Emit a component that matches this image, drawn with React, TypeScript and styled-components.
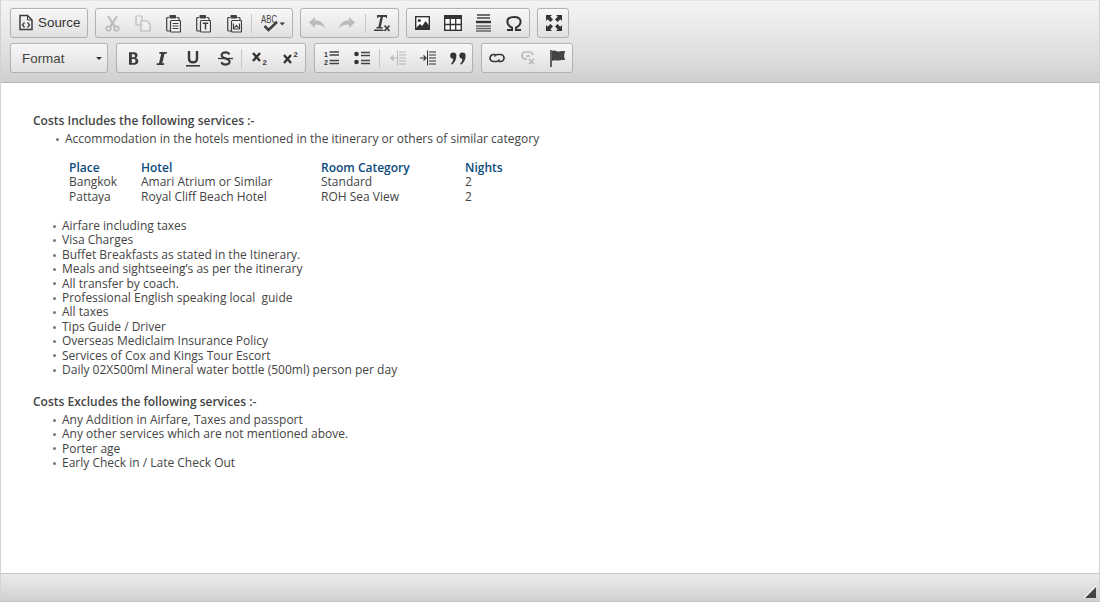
import React from "react";
import styled, { createGlobalStyle } from "styled-components";

const Global = createGlobalStyle`
  html, body { margin: 0; padding: 0; background: #fff; }
  #root { width: 1100px; height: 602px; }
`;

const Editor = styled.div`
  width: 1100px; height: 602px; box-sizing: border-box;
  display: flex; flex-direction: column;
  border: 1px solid #d2d2d2; border-top-color: #e4e4e4; border-bottom-color: #c4c4c4;
  background: #fff;
`;
const Toolbar = styled.div`
  flex: 0 0 82px; box-sizing: border-box;
  padding: 7px 9px 0;
  display: flex; flex-direction: column; gap: 5px;
  background: linear-gradient(to bottom, #f4f4f4 0%, #e6e6e6 45%, #cfd1cf 100%);
  border-bottom: 1px solid #b6b6b6;
`;
const Row = styled.div`
  display: flex; height: 30px;
`;
const Group = styled.div<{ $w: number; $ml?: number }>`
  width: ${p => p.$w}px; margin-left: ${p => p.$ml ?? 0}px;
  box-sizing: border-box; height: 30px;
  display: flex; align-items: center; padding-left: 1px;
  border: 1px solid #b2b2b2; border-radius: 3px;
  background: linear-gradient(to bottom, #f7f7f7, #ececec 50%, #e0e0e0);
  box-shadow: 0 1px 0 rgba(255,255,255,.6) inset, 0 0 1px rgba(0,0,0,.1);
`;
const Btn = styled.div<{ $w?: number; $off?: boolean }>`
  width: ${p => p.$w ?? 30.5}px; height: 28px; flex: none;
  display: flex; align-items: center; justify-content: center;
  opacity: ${p => (p.$off ? 0.28 : 1)};
  svg { display: block; }
`;
const Sep = styled.div<{ $ml?: number }>`
  width: 1px; height: 19px; background: #c6c6c6; flex: none; margin-left: ${p => p.$ml ?? 0}px;
`;
const SourceBtn = styled.div`
  flex: 1; height: 28px; display: flex; align-items: center; gap: 5px; padding: 0 0 1px 7px; box-sizing: border-box;
  font: 13.4px "Liberation Sans", Arial, sans-serif; color: #333;
`;
const Combo = styled(Group)`
  padding: 1px 0 0 11px; justify-content: space-between;
  font: 13.4px "Liberation Sans", Arial, sans-serif; color: #444;
`;
const ComboArrow = styled.span`
  width: 0; height: 0; margin-right: 5px;
  border-left: 3px solid transparent; border-right: 3px solid transparent; border-top: 3px solid #333;
`;
const Content = styled.div`
  flex: 1; padding: 31px 0 0 32px; box-sizing: border-box;
  font: 12px/14.4px "Open Sans", "Noto Sans", sans-serif; color: #444;
`;
const Heading = styled.div<{ $mt?: number }>`
  font-weight: 600; color: #444; margin-top: ${p => p.$mt ?? 0}px;
`;
const List = styled.ul<{ $ml: number; $mt: number }>`
  list-style: none; margin: ${p => p.$mt}px 0 0 ${p => p.$ml}px; padding: 0;
`;
const Item = styled.li`
  display: flex; align-items: center; white-space: pre;
  &::before {
    content: ""; flex: none; width: 3px; height: 3px; border-radius: 50%;
    background: #777; margin-right: 6px;
  }
`;
const Table = styled.table`
  border-collapse: collapse; margin: 14px 0 15px 36px; table-layout: fixed; width: 456px;
  th, td { padding: 0; text-align: left; height: 14.4px; line-height: 14.4px; }
  th { color: #0b4a7c; font-weight: 600; }
`;
const Foot = styled.div`
  flex: 0 0 28px; box-sizing: border-box; display: flex; justify-content: flex-end; align-items: flex-end;
  padding: 0 3px 3px 0;
  border-top: 1px solid #c8c8c8;
  background: linear-gradient(to bottom, #ebebeb, #cfd1cf);
`;

const S = { fill: "none", stroke: "#3f3f3f", strokeWidth: 1.5 } as const;
const F = "#3f3f3f";

const Doc = () => (
  <svg width="14" height="17" viewBox="0 0 14 17"><path d="M1 1.500h7.500l4.500 4.500v9.500H1z" {...S} /><path d="M8.500 1.500v4.500H13" {...S} strokeWidth={1} /><path d="M5.500 8.500L3.500 11l2 2.500M8.500 8.500l2 2.500-2 2.500" {...S} strokeWidth={1.300} /></svg>
);
const Cut = () => (
  <svg width="15" height="17" viewBox="0 0 15 17"><path d="M3 1l7 11M12 1L5 12" stroke={F} strokeWidth={2} fill="none" /><circle cx="3.500" cy="13.500" r="2.300" {...S} /><circle cx="11.500" cy="13.500" r="2.300" {...S} /></svg>
);
const Copy = () => (
  <svg width="16" height="17" viewBox="0 0 16 17"><path d="M1 1h6v9H1z" {...S} strokeWidth={1.200} /><path d="M6 6h6l3 3v7H6z" fill="#fff" stroke="#3f3f3f" strokeWidth={1.200} /></svg>
);
const Paste = ({ v }: { v: "l" | "t" | "w" }) => (
  <svg width="15" height="19" viewBox="0 0 15 19">
    <path d="M3 3.500H1.700a1 1 0 0 0-1 1V16a1 1 0 0 0 1 1H4" {...S} strokeWidth={1.200} />
    <rect x="3.500" y="1" width="6.500" height="3.500" rx=".8" fill={F} />
    <path d="M10.500 3.500H12a1 1 0 0 1 1 1V6" {...S} strokeWidth={1.200} />
    <rect x="4.500" y="6.500" width="10" height="11.500" rx="1" fill="#f2f2f2" stroke="#3f3f3f" strokeWidth={1.200} />
    {v === "l" && <path d="M6.500 9.500h6M6.500 12h6M6.500 14.500h6" {...S} strokeWidth={1.200} />}
    {v === "t" && <path d="M6.800 9.300h5.400M9.500 9.300v6.200" {...S} strokeWidth={1.500} />}
    {v === "w" && <path d="M6.500 9.500v5.500h6V9.500M7.500 14l2-2.500 2 2.500" {...S} strokeWidth={1.200} />}
  </svg>
);
const Spell = () => (
  <svg width="25" height="20" viewBox="0 0 25 20">
    <text x="0" y="9.500" fontFamily="Liberation Sans, sans-serif" fontSize="11" fill={F} textLength="16" lengthAdjust="spacingAndGlyphs">ABC</text>
    <path d="M3.500 13l4 4 8.500-8" fill="none" stroke={F} strokeWidth={2.500} />
    <path d="M18.500 9.500h5.500l-2.750 3z" fill={F} />
  </svg>
);
const Undo = () => (
  <svg width="16" height="12" viewBox="0 0 16 12"><path d="M0 5.500L6 0v3.200c5 0 9 2.300 10 8.800-2-3.500-5-4.500-10-4.500V11z" fill={F} /></svg>
);
const Redo = () => (
  <svg width="16" height="12" viewBox="0 0 16 12"><path d="M16 5.500L10 0v3.200C5 3.200 1 5.500 0 12c2-3.500 5-4.500 10-4.500V11z" fill={F} /></svg>
);
const RemoveFormat = () => (
  <svg width="16" height="18" viewBox="0 0 16 18">
    <path d="M3 1h10v3h-1l-.5-1H9L6.800 13H8.500v1.500H2.500V13h1.800L6.500 3H4.500L4 4H3z" fill={F} />
    <rect x="0" y="15.500" width="9.500" height="1.500" fill={F} />
    <path d="M10.500 11.500l5 5.500M15.500 11.500l-5 5.500" stroke={F} strokeWidth={1.700} />
  </svg>
);
const ImageIcon = () => (
  <svg width="15" height="14" viewBox="0 0 15 14"><rect x=".7" y=".7" width="13.600" height="12.600" fill="#fff" stroke="#333" strokeWidth={1.400} /><circle cx="4.300" cy="4.500" r="1.500" fill="#333" /><path d="M1 12l4-4 2.200 2L10.500 5 14 9.500V13H1z" fill="#333" /></svg>
);
const TableIcon = () => (
  <svg width="18" height="16" viewBox="0 0 18 16"><rect x=".7" y=".7" width="16.600" height="14.600" fill="#fff" stroke="#333" strokeWidth={1.400} /><rect x="0" y="0" width="18" height="4" fill="#333" /><path d="M0 9.500h18M6.300 4v12M11.700 4v12" stroke="#333" strokeWidth={1.300} /></svg>
);
const HrIcon = () => (
  <svg width="15" height="18" viewBox="0 0 15 18"><path d="M1 1h13M1 4h13" stroke="#444" strokeWidth={1.400} /><rect x="0" y="6.800" width="15" height="2.400" fill="#333" /><path d="M0 12h15M0 14.500h15M0 17h15" stroke="#666" strokeWidth={1.400} /></svg>
);
const Omega = () => (
  <svg width="16" height="15" viewBox="0 0 16 15"><path d="M1 14h5v-2.300C3.500 10.500 1.400 8.500 1.400 5.600 1.400 2.600 4.200 1 8 1s6.600 1.600 6.600 4.600c0 2.900-2.100 4.900-4.600 6.100V14h5" fill="none" stroke="#333" strokeWidth={2} /></svg>
);
const Maximize = () => (
  <svg width="16" height="16" viewBox="0 0 16 16"><path d="M0 0h6L4.300 1.700 7 4.500 4.500 7 1.700 4.300 0 6zM16 0v6l-1.700-1.700L11.500 7 9 4.500l2.700-2.800L10 0zM0 16v-6l1.700 1.700L4.500 9 7 11.500l-2.700 2.800L6 16zM16 16h-6l1.700-1.700L9 11.500 11.500 9l2.800 2.700L16 10z" fill="#333" /></svg>
);
const Bold = () => (
  <svg width="13" height="15" viewBox="0 0 13 15"><path d="M2 1.200h5c2.300 0 3.500 1 3.500 3 0 1.500-.8 2.500-2.200 2.900 1.900.3 3 1.400 3 3.200 0 2.300-1.500 3.500-4.100 3.500H2zM4.800 3.200v3H6.500c1 0 1.400-.5 1.400-1.500s-.4-1.500-1.400-1.500zM4.800 8.100v3.800h2c1.100 0 1.700-.6 1.700-1.900s-.6-1.900-1.700-1.900z" fill="#3b3b3b" fillRule="evenodd" /></svg>
);
const Italic = () => (
  <svg width="12" height="15" viewBox="0 0 12 15"><path d="M3.500 1h7.500l-.3 1.800H8.500L6.300 12.200h2L8 14H.5l.3-1.800h2.200L5.200 2.800H3.200z" fill="#3b3b3b" /></svg>
);
const Underline = () => (
  <svg width="14" height="17" viewBox="0 0 14 17"><path d="M3 1v7.500c0 2.600 1.400 3.800 4 3.800s4-1.200 4-3.800V1" fill="none" stroke="#3b3b3b" strokeWidth={2.400} /><rect x="0" y="15" width="14" height="1.600" fill="#3b3b3b" /></svg>
);
const Strike = () => (
  <svg width="15" height="15" viewBox="0 0 15 15"><path d="M11.500 3.300C10.600 2 9.300 1.400 7.500 1.400 5.200 1.400 3.600 2.500 3.600 4.300c0 4 8 2.500 8 6.300 0 1.900-1.700 3-4 3-2 0-3.500-.8-4.300-2.300" fill="none" stroke="#3b3b3b" strokeWidth={2.100} /><path d="M0 7.500h15" stroke="#3b3b3b" strokeWidth={1.300} /></svg>
);
const Script = ({ sup }: { sup?: boolean }) => (
  <svg width="17" height="18" viewBox="0 0 17 18">
    <path d={sup ? "M1 6l7 8M8 6l-7 8" : "M1 4l7 8M8 4l-7 8"} stroke="#333" strokeWidth={2.400} />
    <text x="10.500" y={sup ? 8 : 16} fontFamily="Liberation Sans, sans-serif" fontWeight="700" fontSize="7.500" fill="#333">2</text>
  </svg>
);
const NumList = () => (
  <svg width="15" height="16" viewBox="0 0 15 16">
    <text x="0" y="6.500" fontFamily="Liberation Sans, sans-serif" fontWeight="700" fontSize="7" fill="#333">1</text>
    <text x="0" y="15" fontFamily="Liberation Sans, sans-serif" fontWeight="700" fontSize="7" fill="#333">2</text>
    <path d="M5.500 2h9.500M5.500 5h9.500M5.500 10.500h9.500M5.500 13.500h9.500" stroke="#444" strokeWidth={1.300} />
  </svg>
);
const BulList = () => (
  <svg width="16" height="14" viewBox="0 0 16 14">
    <circle cx="2.500" cy="3" r="2.300" fill="#333" /><circle cx="2.500" cy="11" r="2.300" fill="#333" />
    <path d="M7 1.500h9M7 4.500h9M7 9.500h9M7 12.500h9" stroke="#444" strokeWidth={1.300} />
  </svg>
);
const Indent = ({ out }: { out?: boolean }) => (
  <svg width="16" height="16" viewBox="0 0 16 16">
    <path d="M7.500 .5v15" stroke="#333" strokeWidth={1} />
    <path d="M9 2h7M9 5h7M9 8h7M9 11h7M9 14h7" stroke="#333" strokeWidth={1.100} />
    {out ? <path d="M6.500 8H1M3.500 5.500L1 8l2.500 2.500" fill="none" stroke="#333" strokeWidth={1.200} /> : <path d="M0 8h5.500M3.500 5.500L6 8l-2.500 2.500" fill="none" stroke="#333" strokeWidth={1.200} />}
  </svg>
);
const Quote = () => (
  <svg width="16" height="13" viewBox="0 0 16 13"><path d="M3.300.5a3.100 3.100 0 0 1 3.100 3.100c0 4-1.700 7.500-4.600 9.200L1 11.500c1.300-1 2-2 2.200-4.800A3.100 3.100 0 0 1 3.300.5zM12.500.5a3.100 3.100 0 0 1 3.100 3.100c0 4-1.700 7.500-4.600 9.200l-.8-1.300c1.300-1 2-2 2.200-4.800A3.100 3.100 0 0 1 12.500.5z" fill="#333" /></svg>
);
const Link = () => (
  <svg width="16" height="10" viewBox="0 0 16 10"><path d="M6.500 1.500H4.500a3.500 3.500 0 0 0 0 7h3a3.500 3.500 0 0 0 3-2" {...S} strokeWidth={1.700} stroke="#333" /><path d="M9.500 8.500h2a3.500 3.500 0 0 0 0-7h-3a3.500 3.500 0 0 0-3 2" {...S} strokeWidth={1.700} stroke="#333" /></svg>
);
const Unlink = () => (
  <svg width="17" height="14" viewBox="0 0 17 14"><path d="M8 8H5a4 4 0 0 1 0-7h5a4 4 0 0 1 4 3" {...S} stroke="#333" strokeWidth={1.700} /><path d="M7 5h4M10 8l5 5M15 8l-5 5" {...S} stroke="#333" strokeWidth={1.700} /></svg>
);
const Flag = () => (
  <svg width="16" height="17" viewBox="0 0 16 17"><path d="M1 0v17" stroke="#333" strokeWidth={1.500} /><path d="M2 1c3-1.500 5 1 7 .5s4-.5 6-.5l-1 5 1 4c-2 0-4 0-6 .5S5 9.500 2 11z" fill="#444" /></svg>
);

const included = [
  "Airfare including taxes", "Visa Charges", "Buffet Breakfasts as stated in the Itinerary.",
  "Meals and sightseeing’s as per the itinerary", "All transfer by coach.", "Professional English speaking local  guide",
  "All taxes", "Tips Guide / Driver", "Overseas Mediclaim Insurance Policy", "Services of Cox and Kings Tour Escort",
  "Daily 02X500ml Mineral water bottle (500ml) person per day",
];
const excluded = [
  "Any Addition in Airfare, Taxes and passport", "Any other services which are not mentioned above.",
  "Porter age", "Early Check in / Late Check Out",
];

export default function App() {
  return (
    <Editor>
      <Global />
      <Toolbar>
        <Row>
          <Group $w={78}><SourceBtn><Doc />Source</SourceBtn></Group>
          <Group $w={198} $ml={7}>
            <Btn $off><Cut /></Btn><Btn $off><Copy /></Btn><Btn><Paste v="l" /></Btn><Btn><Paste v="t" /></Btn><Btn><Paste v="w" /></Btn>
            <Sep $ml={1} /><Btn $w={43}><Spell /></Btn>
          </Group>
          <Group $w={99} $ml={7}>
            <Btn $w={30} $off><Undo /></Btn><Btn $w={30} $off><Redo /></Btn><Sep $ml={3} /><Btn $w={32}><RemoveFormat /></Btn>
          </Group>
          <Group $w={124} $ml={7}>
            <Btn $w={28}><ImageIcon /></Btn><Btn $w={34}><TableIcon /></Btn><Btn $w={26}><HrIcon /></Btn><Btn $w={36}><Omega /></Btn>
          </Group>
          <Group $w={32} $ml={7}><Btn $w={30}><Maximize /></Btn></Group>
        </Row>
        <Row>
          <Combo $w={98}>Format<ComboArrow /></Combo>
          <Group $w={190} $ml={8}>
            <Btn $w={30}><Bold /></Btn><Btn $w={28}><Italic /></Btn><Btn $w={34}><Underline /></Btn><Btn $w={30}><Strike /></Btn>
            <Sep $ml={1} /><Btn $w={37}><Script /></Btn><Btn $w={25}><Script sup /></Btn>
          </Group>
          <Group $w={159} $ml={8}>
            <Btn $w={30}><NumList /></Btn><Btn $w={32}><BulList /></Btn><Sep $ml={1} /><Btn $w={36} $off><Indent out /></Btn><Btn $w={24}><Indent /></Btn><Btn $w={36}><Quote /></Btn>
          </Group>
          <Group $w={92} $ml={8}>
            <Btn $w={28}><Link /></Btn><Btn $w={32} $off><Unlink /></Btn><Btn $w={30}><Flag /></Btn>
          </Group>
        </Row>
      </Toolbar>
      <Content>
        <Heading>Costs Includes the following services :-</Heading>
        <List $ml={23} $mt={4}>
          <Item>Accommodation in the hotels mentioned in the itinerary or others of similar category</Item>
        </List>
        <Table>
          <colgroup><col width="72" /><col width="180" /><col width="144" /><col width="60" /></colgroup>
          <thead><tr><th>Place</th><th>Hotel</th><th>Room Category</th><th>Nights</th></tr></thead>
          <tbody>
            <tr><td>Bangkok</td><td>Amari Atrium or Similar</td><td>Standard</td><td>2</td></tr>
            <tr><td>Pattaya</td><td>Royal Cliff Beach Hotel</td><td>ROH Sea View</td><td>2</td></tr>
          </tbody>
        </Table>
        <List $ml={20} $mt={0}>{included.map(t => <Item key={t}>{t}</Item>)}</List>
        <Heading $mt={17}>Costs Excludes the following services :-</Heading>
        <List $ml={20} $mt={4}>{excluded.map(t => <Item key={t}>{t}</Item>)}</List>
      </Content>
      <Foot>
        <svg width="13" height="13" viewBox="0 0 13 13"><path d="M13 0v13H0z" fill="#f4f4f4" /><path d="M13 2v11H2z" fill="#444" /></svg>
      </Foot>
    </Editor>
  );
}
